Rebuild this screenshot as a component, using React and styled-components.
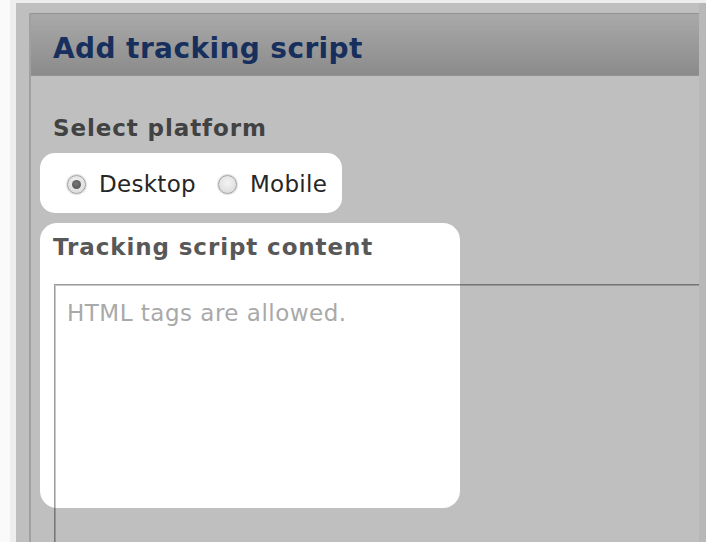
import styled, { createGlobalStyle } from "styled-components";

const GlobalStyle = createGlobalStyle`
  html, body {
    margin: 0;
    padding: 0;
    background: #f6f6f6;
    overflow: hidden;
  }
`;

const Screen = styled.div`
  height: 542px;
  padding: 3px 0 0 16px;
  box-sizing: border-box;
  background: linear-gradient(to right, #fafafa 0, #fafafa 10px, #eeeeee 10px);
`;

const Dialog = styled.div`
  position: relative;
  width: 690px;
  height: 539px;
  box-sizing: border-box;
  padding: 10px 0 0 13px;
  background: #ffffff;
  border-right: 7px solid #b8b8b8;
  overflow: hidden;
`;

const Panel = styled.section`
  height: 100%;
  border-left: 2px solid #d6d6d6;
  background: #ffffff;
`;

const Header = styled.header`
  display: flex;
  align-items: center;
  height: 63px;
  padding: 7px 0 0 22px;
  box-sizing: border-box;
  border-top: 1px solid #c4c4c4;
  border-bottom: 1px solid #c4c4c4;
  background: linear-gradient(to bottom, #e2e2e2, #bababa);
`;

const Title = styled.h2`
  margin: 0;
  font-family: "DejaVu Sans", Verdana, sans-serif;
  font-size: 28px;
  letter-spacing: 0.4px;
  font-weight: bold;
  color: #1e3f7c;
`;

const Body = styled.div`
  padding: 38px 0 0 22px;
`;

const FieldLabel = styled.div`
  margin-top: ${(p) => p.$gap}px;
  font-family: "DejaVu Sans", Verdana, sans-serif;
  font-size: 23px;
  letter-spacing: 0.9px;
  line-height: 28px;
  font-weight: bold;
  color: #585858;
`;

const RadioRow = styled.div`
  display: flex;
  align-items: center;
  gap: 22px;
  margin: 28px 0 0 14px;
  height: 28px;
`;

const RadioOption = styled.label`
  display: flex;
  align-items: center;
  gap: 13px;
  font-family: "DejaVu Sans", Verdana, sans-serif;
  font-size: 23px;
  letter-spacing: 0.3px;
  line-height: 28px;
  color: #262626;
`;

const RadioDot = styled.span`
  position: relative;
  width: 17px;
  height: 17px;
  border-radius: 50%;
  border: 1px solid #a2a2a2;
  background: radial-gradient(circle at 50% 40%, #f4f4f4, #d6d6d6);
  box-shadow: 0 0 1px 1px #dcdcdc;

  &::after {
    content: "";
    display: ${(p) => (p.$checked ? "block" : "none")};
    position: absolute;
    left: 4px;
    top: 4px;
    width: 9px;
    height: 9px;
    border-radius: 50%;
    background: radial-gradient(circle at 45% 40%, #7a7a7a, #4a4a4a);
  }
`;

const ScriptBox = styled.textarea`
  display: block;
  width: 700px;
  height: 300px;
  margin: 23px 0 0 1px;
  padding: 14px 12px;
  box-sizing: border-box;
  border: 1px solid #9c9c9c;
  box-shadow: inset 1px 1px 0 #c8c8c8;
  resize: none;
  outline: none;
  font-family: "DejaVu Sans", Verdana, sans-serif;
  font-size: 23px;
  letter-spacing: 0.5px;
  line-height: 28px;
  color: #333;

  &::placeholder {
    color: #a9a9a9;
  }
`;

const Spotlight = styled.svg`
  position: absolute;
  inset: 0;
  width: 100%;
  height: 100%;
  pointer-events: none;
`;

const cutouts = [
  { x: 24, y: 150, w: 302, h: 60, r: 15 },
  { x: 24, y: 220, w: 420, h: 285, r: 17 },
];

function TourMask() {
  return (
    <Spotlight>
      <defs>
        <mask id="tour-cutouts">
          <rect width="100%" height="100%" fill="white" />
          {cutouts.map((c, i) => (
            <rect key={i} x={c.x} y={c.y} width={c.w} height={c.h} rx={c.r} fill="black" />
          ))}
        </mask>
      </defs>
      <rect width="100%" height="100%" fill="#000" fillOpacity="0.25" mask="url(#tour-cutouts)" />
    </Spotlight>
  );
}

export default function App() {
  return (
    <>
      <GlobalStyle />
      <Screen>
        <Dialog>
          <Panel>
            <Header>
              <Title>Add tracking script</Title>
            </Header>
            <Body>
              <FieldLabel $gap={0}>Select platform</FieldLabel>
              <RadioRow>
                <RadioOption>
                  <RadioDot $checked />
                  Desktop
                </RadioOption>
                <RadioOption>
                  <RadioDot />
                  Mobile
                </RadioOption>
              </RadioRow>
              <FieldLabel $gap={35}>Tracking script content</FieldLabel>
              <ScriptBox placeholder="HTML tags are allowed." />
            </Body>
          </Panel>
          <TourMask />
        </Dialog>
      </Screen>
    </>
  );
}
